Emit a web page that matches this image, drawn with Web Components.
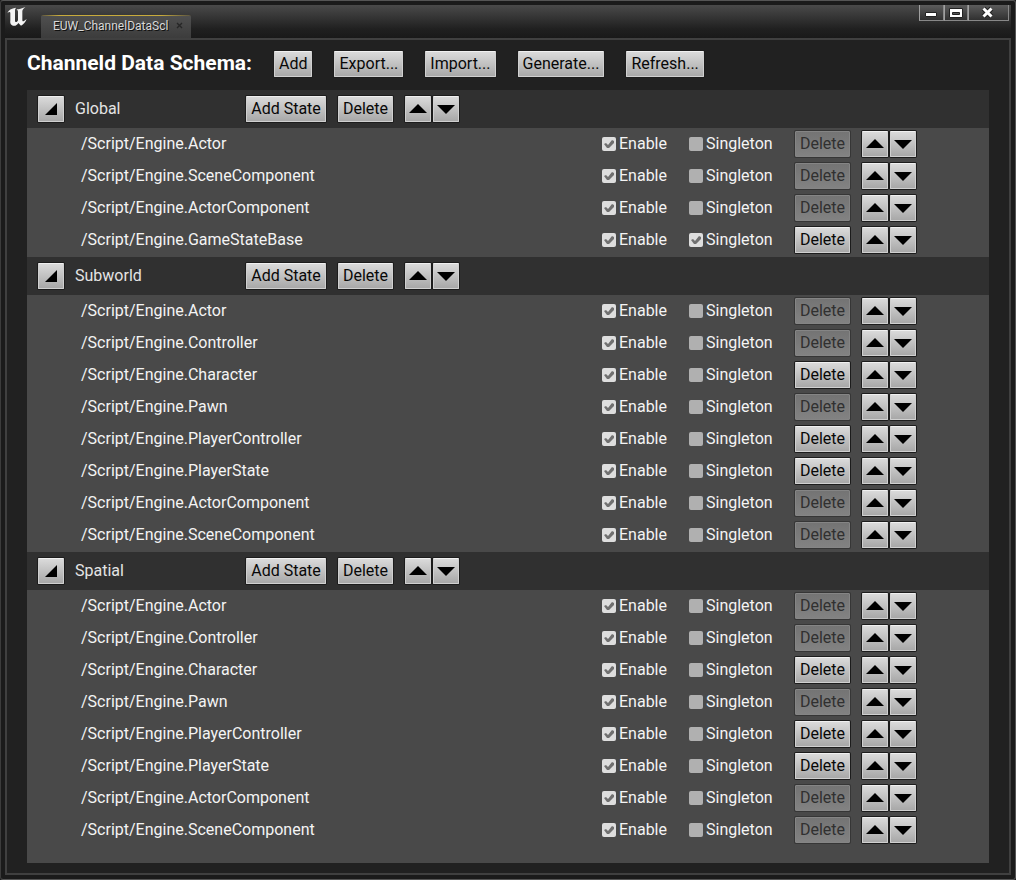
<!DOCTYPE html>
<html lang="en">
<head>
<meta charset="utf-8">
<title>Channeld Data Schema</title>
<style>
  html, body { margin: 0; min-height: 100%; background: #1b1b1b; }
  body { font-family: Roboto, "Liberation Sans", sans-serif; font-size: 16px; line-height: 20px; color: #f4f4f4; }
</style>
</head>
<body>
<schema-app></schema-app>

<template id="t-button">
  <style>
    :host { display: inline-block; }
    button {
      display: flex; align-items: center; justify-content: center;
      box-sizing: border-box; width: 100%; height: 26px; margin: 0; padding: 0 4px;
      font: inherit; line-height: 20px; color: #080808; white-space: nowrap;
      background: linear-gradient(#dadada, #a8a8a8);
      border: 1px solid #d0d0d0; border-top-color: #f0f0f0; border-radius: 1px;
      box-shadow: 0 0 0 1px #1c1c1c;
    }
    button:disabled {
      color: #303030; background: linear-gradient(#747474, #828282);
      border-color: #858585; box-shadow: 0 0 0 1px #363636;
    }
  </style>
  <button type="button"><slot></slot></button>
</template>

<template id="t-icon">
  <style>
    :host { display: inline-block; }
    button {
      display: grid; place-items: center; box-sizing: border-box;
      width: 26px; height: 26px; margin: 0; padding: 0;
      background: linear-gradient(#dadada, #a8a8a8);
      border: 1px solid #d0d0d0; border-top-color: #f0f0f0; border-radius: 1px;
      box-shadow: 0 0 0 1px #1c1c1c;
    }
    svg { display: block; width: 24px; height: 24px; }
  </style>
  <button type="button"><svg viewBox="0 0 24 24" aria-hidden="true"><path/></svg></button>
</template>

<template id="t-check">
  <style>
    :host { display: block; }
    label { display: flex; align-items: center; gap: 3px; }
    input {
      appearance: none; flex: none; width: 14px; height: 14px; margin: 0;
      background: #b0b0b0; border-radius: 2px;
    }
    input:checked { background: #dedede; }
    input:checked::before {
      content: ""; display: block; width: 14px; height: 14px; background: #707070;
      clip-path: polygon(2px 7px, 4px 6px, 6px 8px, 10px 3px, 12px 4px, 12px 6px, 7px 11px, 5px 11px);
    }
  </style>
  <label><input type="checkbox"><span><slot></slot></span></label>
</template>

<template id="t-row">
  <style>
    :host {
      display: grid; align-items: center; height: 32px; padding-left: 54px;
      grid-template-columns: minmax(0, 1fr) 87px 106px 55px 12px 26px 2px 26px 73px;
    }
    .del { grid-column: 4; }
    .up { grid-column: 6; }
    .down { grid-column: 8; }
  </style>
  <span><slot></slot></span>
  <ue-check class="enable" checked>Enable</ue-check>
  <ue-check class="single">Singleton</ue-check>
  <ue-button class="del">Delete</ue-button>
  <ue-icon-button class="up" icon="up" label="Move up"></ue-icon-button>
  <ue-icon-button class="down" icon="down" label="Move down"></ue-icon-button>
</template>

<template id="t-group">
  <style>
    :host { display: block; }
    header {
      display: grid; align-items: center; height: 38px; padding-left: 11px; background: #303030;
      grid-template-columns: 26px 11px 171px 80px 12px 55px 12px 26px 2px 26px;
    }
    h2 { grid-column: 3; margin: 0; font: inherit; color: #e4e4e4; }
    .add { grid-column: 4; }
    .del { grid-column: 6; }
    .up { grid-column: 8; }
    .down { grid-column: 10; }
    .rows { padding-bottom: 1px; }
  </style>
  <header>
    <ue-icon-button icon="expanded" label="Collapse"></ue-icon-button>
    <h2></h2>
    <ue-button class="add">Add State</ue-button>
    <ue-button class="del">Delete</ue-button>
    <ue-icon-button class="up" icon="up" label="Move up"></ue-icon-button>
    <ue-icon-button class="down" icon="down" label="Move down"></ue-icon-button>
  </header>
  <div class="rows"><slot></slot></div>
</template>

<template id="t-window">
  <style>
    :host {
      display: flex; flex-direction: column; box-sizing: border-box; min-height: 100vh;
      padding: 0 4px 4px; background: #1b1b1b;
      border: 1px solid #555; border-left-color: #3c3c3c; border-radius: 3px;
    }
    .title {
      display: flex; height: 33px; margin-top: 4px; padding: 0 2px;
      background: linear-gradient(#4a4a4a, #202020 24px, #191919);
    }
    .logo { width: 20px; height: 20px; margin-top: 2px; }
    .tab {
      display: flex; align-items: center; box-sizing: border-box; width: 150px; height: 23px;
      margin: 10px auto 0 14px; padding: 0 8px 2px 12px; gap: 5px;
      font-size: 12px; line-height: 16px; color: #d8d8d8; text-shadow: 1px 1px #111;
      background:
        linear-gradient(90deg, #5a5440, #c8ab3c 12%, #c8ab3c 80%, #5a5440) top / 100% 1px no-repeat,
        linear-gradient(#505050, #3c3c3c);
      border-radius: 2px 2px 0 0;
    }
    .tab span { flex: 1; overflow: hidden; white-space: nowrap; }
    .tab button { display: block; padding: 0; border: 0; background: none; width: 7px; height: 7px; }
    .tab svg { display: block; width: 7px; height: 7px; }
    .controls { display: flex; height: 16px; }
    .controls button {
      box-sizing: border-box; width: 25px; height: 16px; padding: 0;
      background: linear-gradient(#5c5c5c, #303030); border: 1px solid #888; border-top: 0;
      border-left-color: #a0a0a0;
    }
    .controls button:nth-child(2) { width: 24px; }
    .controls button:last-child { width: 41px; }
    .controls svg { display: block; width: 100%; height: 15px; }
    main {
      flex: 1; display: flex; flex-direction: column; padding: 0 20px 10px;
      border: 2px solid #404040; background: #212121;
    }
  </style>
  <div class="title">
    <svg class="logo" viewBox="0 0 60 60" aria-hidden="true"><path fill="#f4f4f4" d="M1 19 C4 9 13 4 27 2 L24 8 V41 C24 45 27 46 30 44 L33 40 V14 C33 10 30 9 29 7 C36 7 44 5 55 0 C49 5 46 8 46 13 V39 C46 43 48 44 51 42 L59 36 C55 46 50 51 42 56 L34 48 C30 54 25 58 18 56 C10 54 9 47 10 40 V18 C10 14 6 14 1 19Z"/></svg>
    <div class="tab"><span><slot name="tab"></slot></span><button type="button" aria-label="Close tab"><svg viewBox="0 0 7 7"><path d="M1 1L6 6M6 1L1 6" stroke="#262626" stroke-width="1.4"/></svg></button></div>
    <div class="controls">
      <button type="button" aria-label="Minimize"><svg viewBox="0 0 23 15"><path d="M5.500 7.500H16.500V11.500H5.500Z" fill="#fff" stroke="#222"/></svg></button>
      <button type="button" aria-label="Maximize"><svg viewBox="0 0 22 15"><path d="M4.500 3.500H17.500V12.500H4.500Z" fill="#fff" stroke="#222"/><path d="M7.500 7.500H14.500V9.500H7.500Z" fill="#555" stroke="#222"/></svg></button>
      <button type="button" aria-label="Close"><svg viewBox="0 0 39 15"><path d="M14.500 3.500L22.500 11.500M22.500 3.500L14.500 11.500" stroke="#222" stroke-width="5"/><path d="M14.500 3.500L22.500 11.500M22.500 3.500L14.500 11.500" stroke="#fff" stroke-width="3"/></svg></button>
    </div>
  </div>
  <main><slot></slot></main>
</template>

<template id="t-app">
  <style>
    :host { display: block; }
    .bar { display: flex; align-items: center; gap: 22px; height: 48px; padding-bottom: 2px; }
    h1 { margin: 0; padding-bottom: 2px; font-size: 21px; line-height: 24px; font-weight: 700; color: #fff; white-space: nowrap; }
    .list { flex: 1; padding-bottom: 16px; background: #494949; }
  </style>
  <ue-window>
    <span slot="tab">EUW_ChannelDataScl</span>
    <div class="bar">
      <h1>Channeld Data Schema:</h1>
      <ue-button>Add</ue-button>
      <ue-button>Export...</ue-button>
      <ue-button>Import...</ue-button>
      <ue-button>Generate...</ue-button>
      <ue-button>Refresh...</ue-button>
    </div>
    <div class="list"></div>
  </ue-window>
</template>

<script>
  class Base extends HTMLElement {
    constructor() {
      super();
      const t = document.getElementById(this.constructor.template);
      this.attachShadow({ mode: "open" }).append(t.content.cloneNode(true));
    }
    $(s) { return this.shadowRoot.querySelector(s); }
  }

  class UeButton extends Base {
    static template = "t-button";
    static observedAttributes = ["disabled"];
    attributeChangedCallback() { this.$("button").disabled = this.hasAttribute("disabled"); }
  }

  const ICONS = {
    up: "M3 16L12 7L21 16Z",
    down: "M3 8L12 17L21 8Z",
    expanded: "M18 6V18H6Z"
  };
  class UeIconButton extends Base {
    static template = "t-icon";
    connectedCallback() {
      this.$("path").setAttribute("d", ICONS[this.getAttribute("icon")]);
      this.$("button").setAttribute("aria-label", this.getAttribute("label"));
    }
  }

  class UeCheck extends Base {
    static template = "t-check";
    static observedAttributes = ["checked"];
    attributeChangedCallback() { this.$("input").checked = this.hasAttribute("checked"); }
  }

  class StateRow extends Base {
    static template = "t-row";
    connectedCallback() {
      this.$(".single").toggleAttribute("checked", this.hasAttribute("singleton"));
      this.$(".del").toggleAttribute("disabled", !this.hasAttribute("removable"));
    }
  }

  class ChannelGroup extends Base {
    static template = "t-group";
    connectedCallback() { this.$("h2").textContent = this.getAttribute("name"); }
  }

  class UeWindow extends Base { static template = "t-window"; }

  const ENTITY_STATES = ["Actor", "Controller", "Character*", "Pawn", "PlayerController*", "PlayerState*", "ActorComponent", "SceneComponent"];
  const CHANNELS = [
    ["Global", ["Actor", "SceneComponent", "ActorComponent", "GameStateBase*!"]],
    ["Subworld", ENTITY_STATES],
    ["Spatial", ENTITY_STATES]
  ];
  /* "*" marks a state that can be deleted, "!" a singleton state */
  class SchemaApp extends Base {
    static template = "t-app";
    connectedCallback() {
      for (const [name, states] of CHANNELS) {
        const group = document.createElement("channel-group");
        group.setAttribute("name", name);
        for (const s of states) {
          const row = document.createElement("state-row");
          row.textContent = "/Script/Engine." + s.replace(/[*!]/g, "");
          row.toggleAttribute("removable", s.includes("*"));
          row.toggleAttribute("singleton", s.includes("!"));
          group.append(row);
        }
        this.$(".list").append(group);
      }
    }
  }

  customElements.define("ue-button", UeButton);
  customElements.define("ue-icon-button", UeIconButton);
  customElements.define("ue-check", UeCheck);
  customElements.define("state-row", StateRow);
  customElements.define("channel-group", ChannelGroup);
  customElements.define("ue-window", UeWindow);
  customElements.define("schema-app", SchemaApp);
</script>
</body>
</html>
